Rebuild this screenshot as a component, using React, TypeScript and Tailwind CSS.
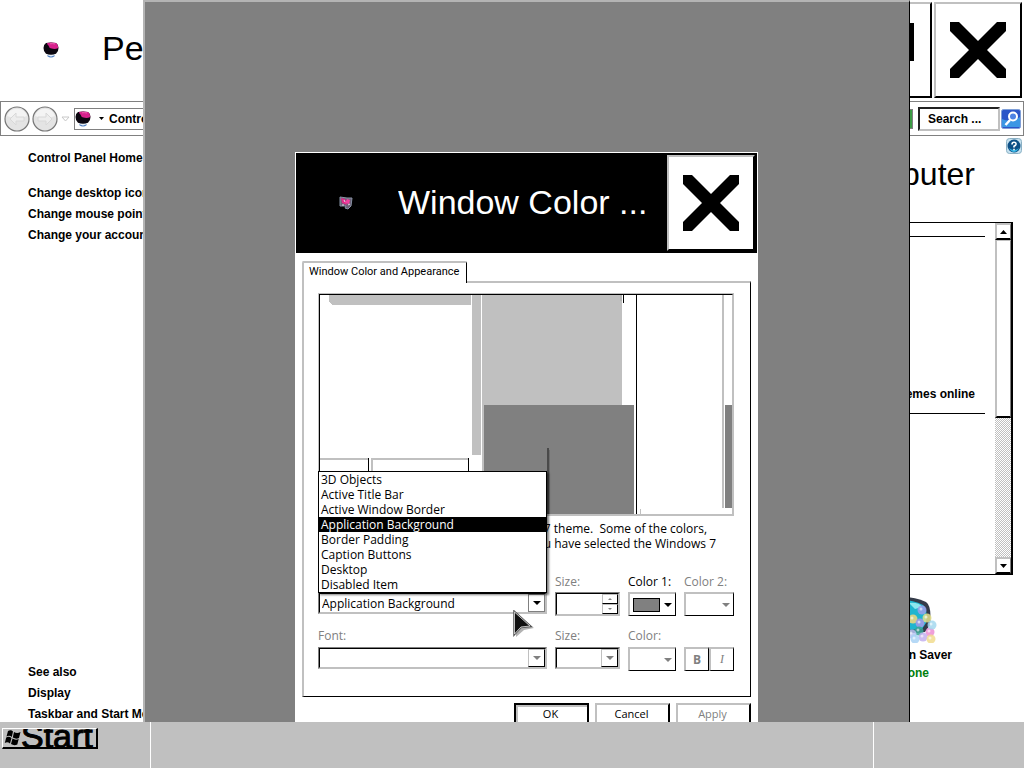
import React from "react";

const EDGE = "border-2 border-t-[#c0c0c0] border-l-[#c0c0c0] border-r-black border-b-black";
const THIN_EDGE = "border-t-2 border-r border-b border-l-2 border-t-[#c0c0c0] border-r-black border-b-black border-l-[#c0c0c0]";

function CloseGlyph() {
  return (
    <svg width="56" height="56" viewBox="0 0 56 56" aria-hidden="true">
      <path d="M0 0H9L28 19L47 0H56V9L37 28L56 47V56H47L28 37L9 56H0V47L19 28L0 9Z" fill="#000" />
    </svg>
  );
}

function Caret({ color = "#000" }: { color?: string }) {
  return (
    <svg width="8" height="4" viewBox="0 0 8 4" aria-hidden="true">
      <path d="M0 0H8L4 4Z" fill={color} />
    </svg>
  );
}

function DisplayIcon({ size }: { size: number }) {
  return (
    <svg width={size} height={size} viewBox="0 0 16 16" aria-hidden="true">
      <path d="M4.500 13.500Q8 16.500 11.500 13.500" fill="none" stroke="#4d7dc0" strokeWidth="1.200" />
      <path d="M5 13H11" stroke="#cfe2f5" strokeWidth="1" />
      <path d="M3 1Q8 0 13 1Q15.500 2.500 15.500 6Q15.500 10 13 11.800Q8 13.500 3 11.800Q.5 10 .5 6Q.5 2.500 3 1Z" fill="#0b0710" />
      <path d="M4 .9Q8 0 13 1Q15.300 2.500 15.300 6Q12 7.500 8.500 6.500Q6 6 5.500 3.500Q4.500 3 4 .9Z" fill="#d6218c" />
      <path d="M7 1.800Q9.500 1.400 12 2" stroke="#ee5fb2" fill="none" />
    </svg>
  );
}

function NavOrb({ label, flip }: { label: string; flip?: boolean }) {
  return (
    <button aria-label={label} className="shrink-0">
      <svg width="26" height="26" viewBox="0 0 26 26">
        <circle cx="13" cy="13" r="12" fill="#e4e4e4" stroke="#777" strokeWidth="1.200" />
        <path d="M3 10A10.500 10.500 0 0 1 23 10Q13 14 3 10Z" fill="#f4f4f4" />
        <path
          d={flip ? "M20 13L14 7V11H6V15H14V19Z" : "M6 13L12 7V11H20V15H12V19Z"}
          fill="#ededed"
          stroke="#d8d8d8"
        />
      </svg>
    </button>
  );
}

function Combo({ label, disabled, value = "", children }: {
  label: string; disabled?: boolean; value?: string; children?: React.ReactNode;
}) {
  return (
    <div className="relative flex h-[22px] border border-t-[#808080] border-l-[#808080] border-r-[#c0c0c0] border-b-[#c0c0c0] bg-white">
      <div className="flex min-w-0 flex-1 border border-t-black border-l-black border-r-[#c0c0c0] border-b-[#c0c0c0]">
        <select
          aria-label={label}
          disabled={disabled}
          className="min-w-0 flex-1 appearance-none bg-white pt-px pl-[2px] text-[12px] leading-[16px] text-black opacity-100 outline-none"
        >
          <option>{value}</option>
        </select>
        <span
          className={
            disabled
              ? "pointer-events-none flex w-[17px] items-center justify-center border border-t-[#c0c0c0] border-l-[#c0c0c0] border-r-black border-b-black"
              : "pointer-events-none flex w-[17px] items-center justify-center border border-[#808080]"
          }
        >
          <Caret color={disabled ? "#808080" : "#000"} />
        </span>
      </div>
      {children}
    </div>
  );
}

function ColorButton({ label, swatch }: { label: string; swatch?: boolean }) {
  return (
    <button
      aria-label={label}
      disabled={!swatch}
      className={`flex h-6 w-full items-center justify-end gap-1 bg-white pr-[3px] ${THIN_EDGE}`}
    >
      {swatch && <span className="h-[14px] w-[27px] border border-black bg-[#808080]" />}
      <Caret color={swatch ? "#000" : "#808080"} />
    </button>
  );
}

function Preview() {
  return (
    <svg width="100%" height="219" viewBox="0 0 412 219" preserveAspectRatio="none" shapeRendering="crispEdges" aria-hidden="true">
      <rect width="412" height="219" fill="#fff" />
      <path d="M9 0H151V10H12L9 7Z" fill="#c0c0c0" />
      <rect x="152" width="9" height="160" fill="#c0c0c0" />
      <rect x="162" width="140" height="219" fill="#c0c0c0" />
      <rect x="303" width="1" height="8" fill="#000" />
      <rect x="300" width="3" height="6" fill="#b4b4b4" />
      <rect x="164" y="110" width="150" height="109" fill="#808080" />
      <rect x="227" y="153" width="2" height="66" fill="#4a4a4a" />
      <rect x="229" y="155" width="1" height="64" fill="#6c6c6c" />
      <rect x="302" y="0" width="1" height="110" fill="#fff" />
      <rect x="316" width="1" height="219" fill="#000" />
      <rect x="320" y="214" width="1" height="5" fill="#c0c0c0" />
      <rect x="402" width="2" height="213" fill="#c0c0c0" />
      <rect x="405" y="110" width="7" height="103" fill="#808080" />
      <path d="M0 163H48V165H0Z M51 163H148V165H53V190H51Z" fill="#c0c0c0" />
      <path d="M48 163H49V190H48Z M148 163H149V190H148Z" fill="#000" />
    </svg>
  );
}

const ITEMS = [
  "3D Objects",
  "Active Title Bar",
  "Active Window Border",
  "Application Background",
  "Border Padding",
  "Caption Buttons",
  "Desktop",
  "Disabled Item",
];

function AppearanceDialog() {
  return (
    <section
      aria-label="Window Color and Appearance"
      className="absolute top-[152px] left-[150px] w-[463px] border border-white bg-white font-['Open_Sans','Noto_Sans',sans-serif] text-[12px] leading-[15px] text-black"
    >
      <header className="flex h-[100px] items-center bg-black py-[2px] pr-[2px] pl-[43px]">
        <svg width="14" height="14" viewBox="0 0 14 14" aria-hidden="true">
          <path d="M1 1L8 2L13 2L12 10L9 13L6 12L7 10L1 10Z" fill="#6d6178" stroke="#8792a4" />
          <path d="M2 2L6 3L8 9L3 7Z" fill="#e02b8b" />
          <path d="M8 3L11 4L10 8L6 7Z" fill="#f43fa1" />
          <path d="M5 4L6 6M9 9L11 8M3 9L5 9" stroke="#e9d6e6" />
        </svg>
        <h1 className="ml-[45px] flex-1 truncate pb-[2px] font-['Liberation_Sans',sans-serif] text-[34px] leading-[40px] text-white">
          Window Color ...
        </h1>
        <button aria-label="Close" className={`flex h-[96px] w-[88px] items-center justify-center bg-white ${EDGE}`}>
          <CloseGlyph />
        </button>
      </header>
      <div className="px-[6px] pt-2">
        <button
          role="tab"
          aria-selected="true"
          className="relative z-10 -mb-[2px] flex h-[22px] items-center rounded-t-[2px] border-t-2 border-r border-l-2 border-t-[#c0c0c0] border-r-black border-l-[#c0c0c0] bg-white pr-[7px] pb-1 pl-[5px] font-['Roboto',sans-serif] text-[11px]"
        >
          Window Color and Appearance
        </button>
        <div className={`pt-[10px] pr-4 pb-[25px] pl-[14px] ${THIN_EDGE}`}>
          <div className="border border-[#c0c0c0]">
            <div className="flex border border-t-black border-l-black border-r-[#c0c0c0] border-b-[#c0c0c0]">
              <Preview />
            </div>
          </div>
          <div className="mt-[5px] overflow-hidden text-right whitespace-nowrap">
            <p className="pr-[27px]">Select a Windows 7 theme.&nbsp; Some of the colors,</p>
            <p className="pr-[18px]">appear only if you have selected the Windows 7</p>
          </div>
          <div className="mt-[23px] grid grid-cols-[229px_65px_48px_50px] gap-x-2 gap-y-[2px] text-[#808080]">
            <span className="h-4" />
            <label htmlFor="item-size">Size:</label>
            <span className="whitespace-nowrap text-black">Color 1:</span>
            <span className="whitespace-nowrap">Color 2:</span>
            <Combo label="Item" value="Application Background">
              <ul
                role="listbox"
                aria-label="Items"
                className="absolute -right-px bottom-full -left-px z-20 border border-black bg-white text-black shadow-[2px_2px_2px_rgba(0,0,0,0.5)]"
              >
                {ITEMS.map((item) => (
                  <li
                    key={item}
                    role="option"
                    aria-selected={item === "Application Background"}
                    className="h-[15px] pl-[2px] aria-selected:bg-black aria-selected:text-white"
                  >
                    {item}
                  </li>
                ))}
              </ul>
              <svg className="absolute top-[17px] left-[194px] z-30" width="22" height="28" viewBox="0 0 22 28" aria-hidden="true">
                <path d="M3 4V27L11 20L21 18Z" fill="#000" opacity=".3" />
                <path d="M1 1V25L8 17.500L18 16.500Z" fill="#111" stroke="#555" strokeWidth="1.500" />
                <path d="M1.500 2V24L8 17L17 16Z" fill="none" stroke="#ddd" strokeWidth=".8" />
              </svg>
            </Combo>
            <div className="flex h-6 border border-t-[#808080] border-r-[#c0c0c0] border-b-[#c0c0c0] border-l-[#808080]">
              <div className="flex min-w-0 flex-1 border border-t-black border-r-[#c0c0c0] border-b-[#c0c0c0] border-l-black">
                <input id="item-size" disabled className="min-w-0 flex-1 bg-white" />
                <div className="flex w-4 flex-col">
                  {["Increase size", "Decrease size"].map((name, i) => (
                    <button
                      key={name}
                      aria-label={name}
                      disabled
                      className="flex flex-1 items-center justify-center border border-t-[#c0c0c0] border-r-black border-b-black border-l-[#c0c0c0]"
                    >
                      <svg width="4" height="2" viewBox="0 0 4 2">
                        <path d={i === 0 ? "M0 2H4L2 0Z" : "M0 0H4L2 2Z"} fill="#808080" />
                      </svg>
                    </button>
                  ))}
                </div>
              </div>
            </div>
            <ColorButton label="Color 1" swatch />
            <ColorButton label="Color 2" />
            <span className="mt-[10px] h-[17px]">Font:</span>
            <span className="mt-[10px]">Size:</span>
            <span className="mt-[10px]">Color:</span>
            <span />
            <Combo label="Font" disabled />
            <Combo label="Font size" disabled />
            <ColorButton label="Font color" />
            <div className="flex">
              <button aria-label="Bold" disabled className={`h-6 flex-1 font-bold ${THIN_EDGE}`}>
                B
              </button>
              <button aria-label="Italic" disabled className={`h-6 flex-1 font-['Liberation_Serif',serif] italic ${THIN_EDGE}`}>
                I
              </button>
            </div>
          </div>
        </div>
        <footer className="mt-[6px] flex justify-end gap-[6px] pb-2 text-[11px]">
          <button className="h-6 w-[75px] border-2 border-black bg-white pr-[2px] pb-1 shadow-[inset_2px_2px_0_#c0c0c0]">OK</button>
          <button className={`h-6 w-[75px] bg-white pr-[2px] pb-1 ${EDGE}`}>Cancel</button>
          <button disabled className={`h-6 w-[75px] bg-white pr-[2px] pb-1 text-[#808080] ${EDGE}`}>Apply</button>
        </footer>
      </div>
    </section>
  );
}

function ScreenSaverIcon() {
  const bubbles: [number, number, string][] = [
    [30, 22, "#f5d77a"], [37, 26, "#a899e8"], [44, 21, "#e5e08a"], [36, 34, "#3aa596"],
    [47, 35, "#ec8ed3"], [29, 37, "#b9c4f2"], [40, 40, "#c3b0ee"], [48, 42, "#f1dc8e"],
    [49, 28, "#a5d8ef"], [32, 42, "#a9d2f4"], [39, 13, "#9fa0ea"],
  ];
  return (
    <svg width="62" height="46" viewBox="0 0 58 46" preserveAspectRatio="xMinYMid meet" aria-hidden="true">
      <path d="M2 2Q26 -3 43 5Q49 9 47 28L42 35Q22 38 4 33Q-4 18 2 2Z" fill="#343b49" />
      <path d="M5 5Q24 0 40 8Q45 11 43 26L39 32Q22 34 7 30Q0 18 5 5Z" fill="#20b5cf" />
      <path d="M26 6Q36 5 39 10L32 12Z" fill="#8de8ef" />
      {bubbles.map(([x, y, c]) => (
        <g key={`${x}-${y}`}>
          <circle cx={x} cy={y} r="4.500" fill={c} opacity=".85" />
          <circle cx={x - 1} cy={y - 1} r="1.500" fill="#fff" opacity=".6" />
        </g>
      ))}
    </svg>
  );
}

function ControlPanelWindow() {
  return (
    <section
      aria-label="Personalization"
      className="absolute inset-x-0 top-0 -bottom-[3px] flex flex-col bg-white font-['Liberation_Sans',sans-serif] text-[12px] font-bold text-black"
    >
      <header className="flex h-[101px] shrink-0 items-center pr-[2px] pb-[2px] pl-[43px]">
        <DisplayIcon size={16} />
        <h2 className="ml-[43px] flex-1 pb-[3px] text-[34px] leading-[40px] font-normal">Personalization</h2>
        <button aria-label="Maximize" className={`flex h-[96px] w-[88px] items-center justify-center pr-[2px] pb-[16px] ${EDGE}`}>
          <svg width="54" height="38" viewBox="0 0 54 38" aria-hidden="true">
            <path d="M0 0H54V38H0ZM5 8V33H49V8Z" fill="#000" fillRule="evenodd" />
          </svg>
        </button>
        <button aria-label="Close" className={`ml-[2px] flex h-[96px] w-[88px] items-center justify-center ${EDGE}`}>
          <CloseGlyph />
        </button>
      </header>
      <nav className="flex h-[35px] shrink-0 items-center border border-[#808080] pr-[2px] pl-[3px]">
        <NavOrb label="Back" />
        <span className="ml-[2px] flex"><NavOrb label="Forward" flip /></span>
        <svg className="mx-[3px]" width="9" height="6" viewBox="0 0 9 6" aria-hidden="true">
          <path d="M1 1H8L4.500 5Z" fill="#fff" stroke="#c8c8c8" />
        </svg>
        <div className="ml-px flex h-[22px] flex-1 items-center border border-[#808080]">
          <DisplayIcon size={16} />
          <svg className="mr-[5px] ml-2" width="5" height="3" viewBox="0 0 5 3" aria-hidden="true">
            <path d="M0 0H5L2.500 3Z" fill="#000" />
          </svg>
          <a href="#control-panel">Control Panel</a>
        </div>
        <button aria-label="Refresh" className="mr-[5px] h-[20px] w-[20px] border border-[#808080] bg-[#3c9b45]" />
        <input
          aria-label="Search"
          placeholder="Search ..."
          className="h-6 w-[82px] border-2 border-t-[#222] border-r-[#c0c0c0] border-b-[#c0c0c0] border-l-[#222] pl-2 outline-none placeholder:text-black placeholder:opacity-100"
        />
        <button aria-label="Go" className="ml-px">
          <svg width="20" height="20" viewBox="0 0 20 20">
            <rect x=".5" y=".5" width="19" height="19" rx="2" fill="#2b55c8" stroke="#7f9fd8" />
            <path d="M1 10Q10 14 19 8V18H1Z" fill="#43b3ef" opacity=".7" />
            <circle cx="12" cy="7.500" r="4" fill="#4d83e4" stroke="#fff" strokeWidth="2" />
            <path d="M9 11L4.500 16" stroke="#fff" strokeWidth="2.500" />
          </svg>
        </button>
      </nav>
      <div className="flex min-h-0 flex-1">
        <aside className="flex w-[200px] shrink-0 flex-col pt-3 pl-[28px] leading-[21px] whitespace-nowrap">
          <a href="#home">Control Panel Home</a>
          <div className="mt-[14px] flex flex-col">
            <a href="#icons">Change desktop icons</a>
            <a href="#pointers">Change mouse pointers</a>
            <a href="#account">Change your account picture</a>
          </div>
          <div className="mt-auto flex flex-col">
            <span>See also</span>
            <a href="#display">Display</a>
            <a href="#taskbar">Taskbar and Start Menu</a>
          </div>
        </aside>
        <main className="flex min-w-0 flex-1 flex-col">
          <div className="flex h-[20px] items-center justify-end pr-[2px]">
            <button aria-label="Help">
              <svg width="16" height="16" viewBox="0 0 16 16">
                <rect x=".5" y=".5" width="15" height="15" rx="3" fill="#c6e1ef" stroke="#8ab0c4" />
                <circle cx="8" cy="8" r="6.500" fill="#0d4f86" />
                <path d="M3 10Q8 14 13 10Q11 14 8 14Q5 14 3 10Z" fill="#34b3e3" />
                <path d="M6 6.500Q6 4.300 8 4.300Q10.200 4.300 10 6.200Q9.700 7.500 8 8.300V9.500M8 10.700V12.200" fill="none" stroke="#fff" strokeWidth="1.600" />
              </svg>
            </button>
          </div>
          <h3 className="flex h-[66px] justify-end overflow-hidden pr-[49px] text-[32px] leading-[37px] font-normal whitespace-nowrap">
            Change your computer
          </h3>
          <div className="mr-[11px] flex h-[353px] border-t border-r-2 border-b border-black">
            <div className="flex min-w-0 flex-1 flex-col pt-[13px] pr-[10px] text-right">
              <hr className="border-black" />
              <a href="#themes" className="mt-[149px] pr-[10px] leading-[16px]">Get more themes online</a>
              <hr className="mt-[11px] border-black" />
            </div>
            <div className="flex w-4 flex-col bg-[repeating-conic-gradient(#c0c0c0_0_25%,#fff_0_50%)] bg-[length:2px_2px]">
              <button aria-label="Scroll up" className="flex h-[17px] items-center justify-center border-t-2 border-r border-b-2 border-l-2 border-t-[#c0c0c0] border-r-[#808080] border-b-black border-l-[#c0c0c0] bg-white">
                <svg width="7" height="4" viewBox="0 0 7 4"><path d="M0 4H7L3.500 0Z" /></svg>
              </button>
              <div className="h-[178px] border-t border-r border-b-2 border-l-2 border-t-[#c0c0c0] border-r-[#808080] border-b-black border-l-[#c0c0c0] bg-white" />
              <button aria-label="Scroll down" className="mt-auto flex h-[17px] items-center justify-center border-t-2 border-r border-b-2 border-l-2 border-t-[#c0c0c0] border-r-[#808080] border-b-black border-l-[#c0c0c0] bg-white">
                <svg width="7" height="4" viewBox="0 0 7 4"><path d="M0 0H7L3.500 4Z" /></svg>
              </button>
            </div>
          </div>
          <a href="#screensaver" className="mt-[22px] mr-[72px] flex flex-col items-center self-end leading-[18px]">
            <ScreenSaverIcon />
            <span className="mt-[3px]">Screen Saver</span>
            <span className="text-[#007f10]">None</span>
          </a>
        </main>
      </div>
    </section>
  );
}

function Taskbar() {
  return (
    <footer className="flex h-[46px] shrink-0 bg-[#c0c0c0] font-['Liberation_Sans',sans-serif]">
      <div className="w-[150px] shrink-0 pt-[6px] pl-[2px]">
        <button className="flex h-[21px] w-[96px] items-center overflow-hidden border-t border-r-2 border-b-2 border-l border-t-white border-r-black border-b-black border-l-white pl-px text-[34px] leading-[34px] text-black [-webkit-text-stroke:1px]">
          <svg width="17" height="16" viewBox="0 0 17 16" className="shrink-0" aria-hidden="true">
            <path d="M4 1Q7 -.5 9 1.500L7.800 7Q5.500 5 2.500 6.500ZM10 2Q13 4 16.500 2L15 8Q12 9.500 8.800 7.500ZM2.200 7.500Q5 6 7.500 8L6 13.500Q3.500 11.500 .8 13ZM8.500 8.500Q11.500 10.500 14.700 9L13.300 14.500Q10 16 7 14Z" fill="#000" />
          </svg>
          <span className="pb-1">Start</span>
        </button>
      </div>
      <div className="flex-1 border-x border-white" />
      <div className="w-[150px] shrink-0" />
    </footer>
  );
}

export default function App() {
  return (
    <div className="flex h-screen flex-col overflow-hidden bg-white">
      <div className="relative min-h-0 flex-1 overflow-hidden">
        <ControlPanelWindow />
        <div className="absolute top-0 right-[114px] bottom-0 left-[143px] overflow-hidden border-t-2 border-r border-l-2 border-t-[#b4b4b4] border-r-black border-l-[#b4b4b4] bg-[#808080]">
          <div className="relative -mt-[2px] h-full">
            <AppearanceDialog />
          </div>
        </div>
      </div>
      <Taskbar />
    </div>
  );
}
